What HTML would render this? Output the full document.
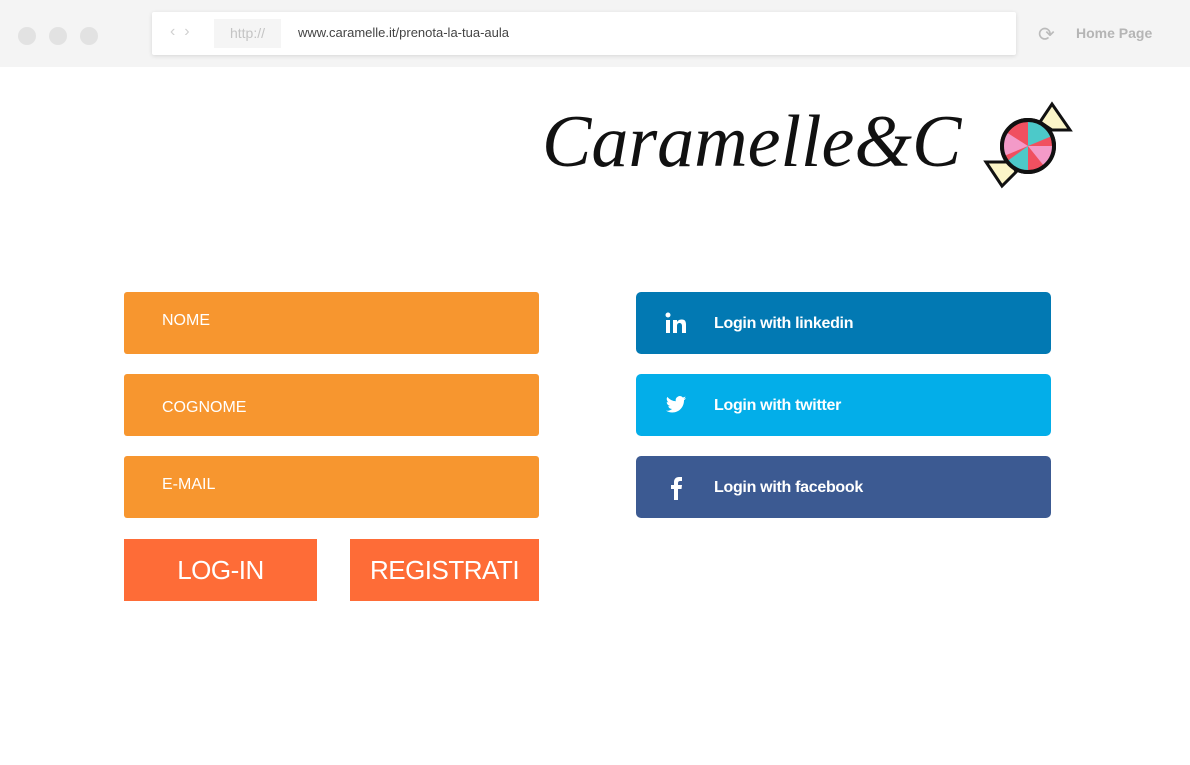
<!DOCTYPE html>
<html><head><meta charset="utf-8"><style>
body{margin:0;width:1190px;height:765px;background:#fff;position:relative;overflow:hidden;font-family:"Liberation Sans",sans-serif}
.top{position:absolute;left:0;top:0;width:1190px;height:67px;background:#f4f4f4}
.dot{position:absolute;top:27px;width:18px;height:18px;border-radius:50%;background:#e2e2e2}
.url{position:absolute;left:152px;top:12px;width:864px;height:43px;background:#fff;box-shadow:0 1px 4px rgba(0,0,0,.12);border-radius:2px}
.abs{position:absolute}
.in{position:absolute;left:124px;width:415px;height:62px;background:#f7962f;border-radius:3px;color:#fff;font-size:16px}
.in span{position:absolute;left:38px}
.btn{position:absolute;top:539px;height:62px;background:#fe6c37;color:#fff;font-size:26px;line-height:62px;text-align:center;letter-spacing:-0.5px}
.so{position:absolute;left:636px;width:415px;height:62px;border-radius:5px;color:#fff;font-size:16px;font-weight:bold;letter-spacing:-0.3px}
.so .t{position:absolute;left:78px;top:23px}
.so svg{position:absolute;left:29px;top:20px}
</style></head><body>
<div class="top">
<div class="dot" style="left:18px"></div><div class="dot" style="left:49px"></div><div class="dot" style="left:80px"></div>
<div class="url">
<div class="abs" style="left:18px;top:11px;color:#d0d0d0;font-size:16px">&#8249;&nbsp;&nbsp;&#8250;</div>
<div class="abs" style="left:62px;top:7px;width:67px;height:29px;background:#f5f5f5;color:#c4c4c4;font-size:14px;line-height:29px;text-align:center">http://</div>
<div class="abs" style="left:146px;top:13px;color:#444;font-size:13px">www.caramelle.it/prenota-la-tua-aula</div>
</div>
<div class="abs" style="left:1038px;top:22px;color:#bbb;font-size:20px">&#10227;</div>
<div class="abs" style="left:1076px;top:25px;color:#b5b5b5;font-size:14px;font-weight:bold">Home Page</div>
</div>
<div class="abs" style="left:542px;top:100px;font-family:'Liberation Serif',serif;font-style:italic;font-size:74px;color:#111">Caramelle&amp;C</div>
<svg class="abs" style="left:982px;top:100px" width="92" height="90" viewBox="0 0 92 90">
<polygon points="58,22 70,4 88,30 70,30" fill="#fbf5c8" stroke="#111" stroke-width="3"/>
<polygon points="30,62 4,62 20,86 34,72" fill="#fbf5c8" stroke="#111" stroke-width="3"/>
<circle cx="46" cy="46" r="26" fill="#f05060" stroke="#111" stroke-width="4"/>
<path d="M46 46 L46 20 A26 26 0 0 1 70 36Z" fill="#4cc9c9"/>
<path d="M46 46 L22 56 A26 26 0 0 1 24 32Z" fill="#f39ac8"/>
<path d="M46 46 L46 72 A26 26 0 0 1 24 62Z" fill="#4cc9c9"/>
<path d="M46 46 L72 46 A26 26 0 0 1 62 66Z" fill="#f39ac8"/>
<circle cx="46" cy="46" r="26" fill="none" stroke="#111" stroke-width="4"/>
</svg>
<div class="in" style="top:292px"><span style="top:20px">NOME</span></div>
<div class="in" style="top:374px"><span style="top:25px">COGNOME</span></div>
<div class="in" style="top:456px"><span style="top:20px">E-MAIL</span></div>
<div class="btn" style="left:124px;width:193px">LOG-IN</div>
<div class="btn" style="left:350px;width:189px">REGISTRATI</div>
<div class="so" style="top:292px;background:#0279b3"><svg width="22" height="22" viewBox="0 0 22 22"><rect x="1" y="8" width="4" height="13" fill="#fff"/><circle cx="3" cy="3" r="2.5" fill="#fff"/><path d="M8 8h4v2c1-2 3-2.5 5-2.5 3 0 4 2 4 5V21h-4v-7c0-2-1-3-2.5-3S12 12 12 14v7H8z" fill="#fff"/></svg><span class="t">Login with linkedin</span></div>
<div class="so" style="top:374px;background:#03aee9"><svg width="22" height="22" viewBox="0 0 24 24"><path d="M23 4.5c-.8.4-1.7.6-2.6.7.9-.6 1.6-1.4 2-2.5-.9.5-1.900.9-2.9 1.1A4.5 4.5 0 0 0 11.8 7.9 12.8 12.8 0 0 1 2.5 3.2a4.5 4.5 0 0 0 1.4 6 4.4 4.4 0 0 1-2-.6v.1a4.5 4.5 0 0 0 3.6 4.4 4.5 4.5 0 0 1-2 .1 4.5 4.5 0 0 0 4.2 3.1A9 9 0 0 1 1 18.2 12.8 12.8 0 0 0 7.9 20.2c8.3 0 12.8-6.9 12.8-12.8v-.6c.9-.6 1.7-1.4 2.3-2.3z" fill="#fff"/></svg><span class="t">Login with twitter</span></div>
<div class="so" style="top:456px;background:#3c5a92"><svg width="22" height="24" viewBox="0 0 22 24"><path d="M9 24V13H6V9h3V6c0-3 2-5 5-5h3v4h-2c-1 0-2 .5-2 2v2h4l-.5 4H13v11z" fill="#fff"/></svg><span class="t">Login with facebook</span></div>
</body></html>
